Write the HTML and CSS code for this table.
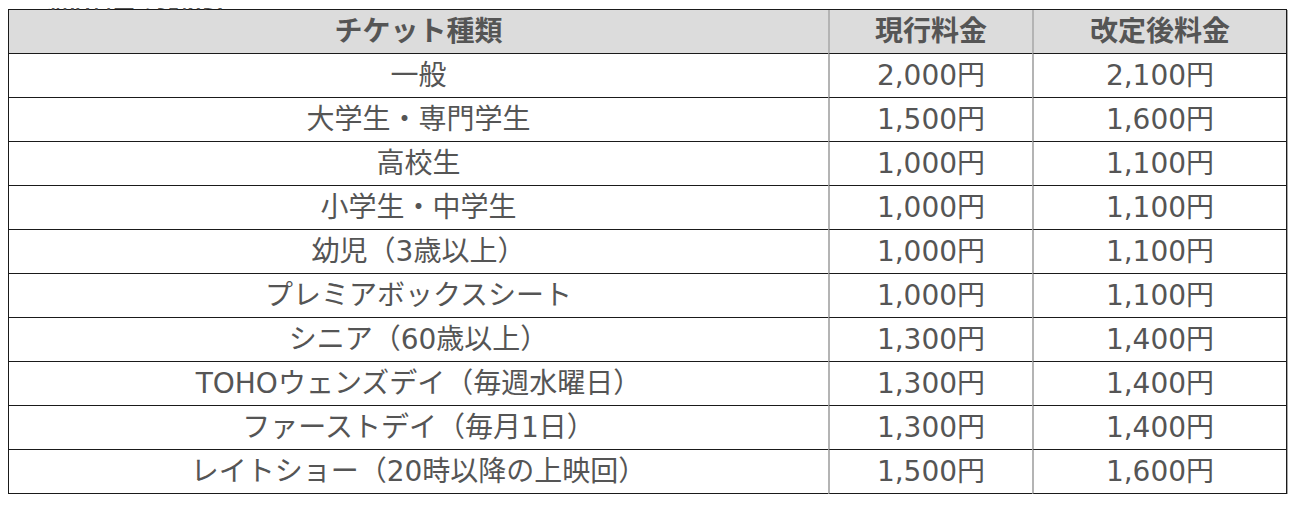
FILE: index.html
```html
<!DOCTYPE html>
<html lang="ja">
<head>
<meta charset="utf-8">
<title>料金改定</title>
<link rel="stylesheet" href="styles.css">
</head>
<body>
<p class="caption">新旧料金の比較表</p>
<table class="price-table">
  <colgroup>
    <col class="col-type">
    <col class="col-now">
    <col class="col-new">
  </colgroup>
  <thead>
    <tr><th>チケット種類</th><th class="sep">現行料金</th><th class="sep">改定後料金</th></tr>
  </thead>
  <tbody>
    <tr><td>一般</td><td class="sep">2,000円</td><td class="sep">2,100円</td></tr>
    <tr><td>大学生・専門学生</td><td class="sep">1,500円</td><td class="sep">1,600円</td></tr>
    <tr><td>高校生</td><td class="sep">1,000円</td><td class="sep">1,100円</td></tr>
    <tr><td>小学生・中学生</td><td class="sep">1,000円</td><td class="sep">1,100円</td></tr>
    <tr><td>幼児（3歳以上）</td><td class="sep">1,000円</td><td class="sep">1,100円</td></tr>
    <tr><td>プレミアボックスシート</td><td class="sep">1,000円</td><td class="sep">1,100円</td></tr>
    <tr><td>シニア（60歳以上）</td><td class="sep">1,300円</td><td class="sep">1,400円</td></tr>
    <tr><td>TOHOウェンズデイ（毎週水曜日）</td><td class="sep">1,300円</td><td class="sep">1,400円</td></tr>
    <tr><td>ファーストデイ（毎月1日）</td><td class="sep">1,300円</td><td class="sep">1,400円</td></tr>
    <tr><td>レイトショー（20時以降の上映回）</td><td class="sep">1,500円</td><td class="sep">1,600円</td></tr>
  </tbody>
</table>
</body>
</html>
```
FILE: styles.css
```css
html, body {
  background: #ffffff;
}
body {
  margin: 8px;
  font-family: "DejaVu Sans", "Noto Sans CJK JP", sans-serif;
  color: #555555;
}
.caption {
  margin: -18px 0 0 0;
  padding-left: 39px;
  font-size: 22px;
  line-height: 19px;
  font-weight: bold;
  color: #555555;
}
.price-table {
  width: 1279px;
  table-layout: fixed;
  border-collapse: separate;
  border-spacing: 0;
  border-top: 1px solid #1a1a1a;
  border-left: 1px solid #1a1a1a;
  border-right: 1px solid #1a1a1a;
  box-shadow: 1px 1px 0 #a8a8a8;
  font-size: 28px;
}
.col-type { width: 819px; }
.col-now { width: 204px; }
.col-new { width: 254px; }
.price-table th,
.price-table td {
  height: 43px;
  padding: 0;
  text-align: center;
  vertical-align: middle;
  line-height: 43px;
  border-bottom: 1px solid #1a1a1a;
  white-space: nowrap;
}
.price-table th {
  background: #dcdcdc;
  font-weight: bold;
  color: #555555;
}
.price-table td {
  color: #555555;
}
.price-table .sep {
  border-left: 2px solid #b4b4b4;
}
```
